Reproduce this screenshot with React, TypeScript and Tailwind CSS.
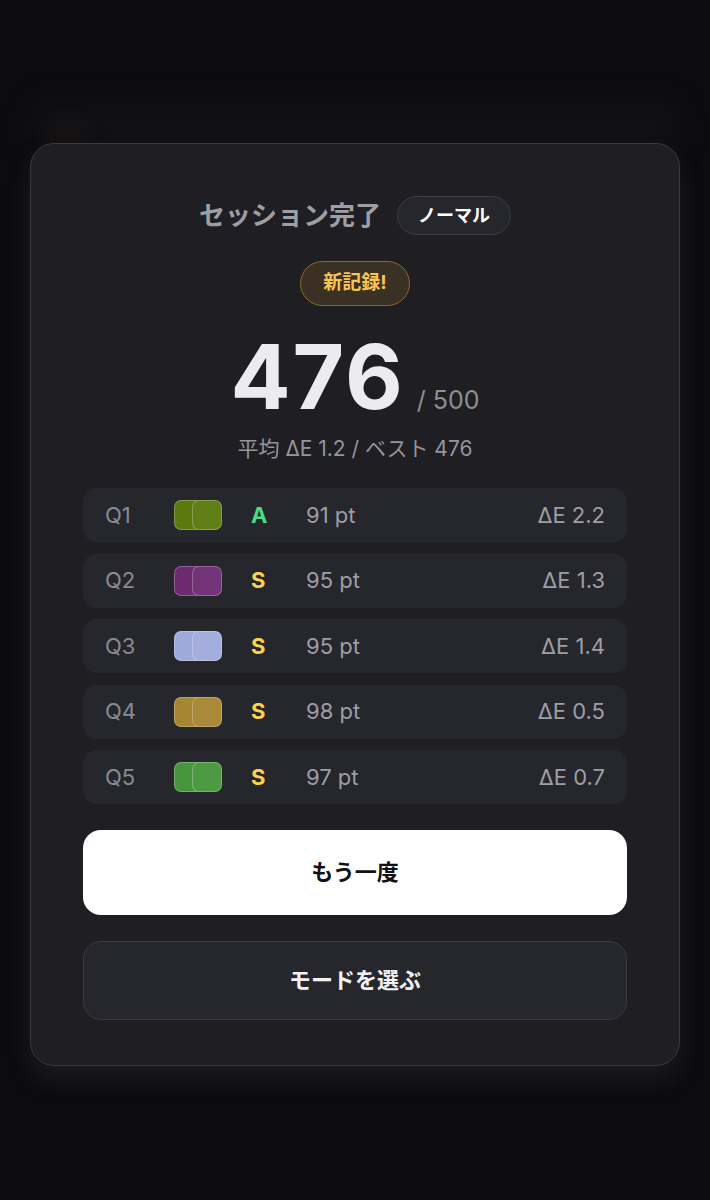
import React from 'react'

type Row = {
  q: string
  a: string
  b: string
  grade: string
  pt: number
  de: string
}

const rows: Row[] = [
  { q: 'Q1', a: '#5a790f', b: '#5f7e16', grade: 'A', pt: 91, de: '2.2' },
  { q: 'Q2', a: '#6b2b6e', b: '#733378', grade: 'S', pt: 95, de: '1.3' },
  { q: 'Q3', a: '#9faadb', b: '#a3aedd', grade: 'S', pt: 95, de: '1.4' },
  { q: 'Q4', a: '#a58633', b: '#a98a38', grade: 'S', pt: 98, de: '0.5' },
  { q: 'Q5', a: '#47963e', b: '#4c9b43', grade: 'S', pt: 97, de: '0.7' },
]

function Swatch({ a, b }: { a: string; b: string }) {
  return (
    <div className="relative h-[30px] w-[48px]">
      <div className="absolute left-0 top-0 h-[30px] w-[30px] rounded-[7px] border border-white/25" style={{ background: a }} />
      <div className="absolute left-[18px] top-0 h-[30px] w-[30px] rounded-[7px] border border-white/25" style={{ background: b }} />
    </div>
  )
}

export default function App() {
  return (
    <div
      className="relative min-h-[1200px] w-full overflow-hidden bg-[#0c0c10] px-[30px] pt-[143px]"
      style={{ fontFamily: 'Inter, "Noto Sans CJK JP", sans-serif' }}
    >
      {/* blurred page behind the modal */}
      <div className="pointer-events-none absolute left-[30px] right-[30px] top-[100px] h-[60px] rounded-[24px] bg-[#111113] blur-md" />
      <div className="pointer-events-none absolute left-[55px] top-[128px] h-[22px] w-[28px] rounded-full bg-[#3a1a22]/30 blur-md" />

      <div className="relative rounded-[24px] border border-[#38383f] bg-[#1e1e23] px-[52px] pb-[45px] pt-[52px] shadow-[0_14px_24px_rgba(60,60,66,0.3)]">
        <div className="flex items-center justify-center gap-[16px]">
          <span className="text-[26px] font-bold text-[#9e9ea6]">セッション完了</span>
          <span className="flex h-[39px] items-center rounded-full border border-[#3c3c44] bg-[#26262d] px-[20px] text-[18px] font-bold text-white">
            ノーマル
          </span>
        </div>

        <div className="mt-[26px] flex justify-center">
          <span className="flex h-[45px] items-center rounded-full border border-[#8a6a2e] bg-[#3a3023] px-[22px] text-[19px] font-bold text-[#f7c552]">
            新記録!
          </span>
        </div>

        <div className="mt-[26px] flex items-baseline justify-center gap-[12px]">
          <span className="text-[89px] font-bold leading-none tracking-[2px] text-[#ececf0]">476</span>
          <span className="text-[25px] leading-none text-[#8e8e96]">/ 500</span>
        </div>

        <div className="mt-[14px] text-center text-[21px] leading-[28px] text-[#95959d]">
          平均 ΔE 1.2 / ベスト 476
        </div>

        <div className="mt-[25px] flex flex-col gap-[11.5px]">
          {rows.map((r) => (
            <div key={r.q} className="flex h-[54px] items-center rounded-[14px] bg-[#26262d] px-[22px] text-[22px]">
              <span className="w-[69px] text-[#8a8a92]">{r.q}</span>
              <div className="w-[77px]">
                <Swatch a={r.a} b={r.b} />
              </div>
              <span className={`w-[55px] font-bold ${r.grade === 'A' ? 'text-[#4ade80]' : 'text-[#fcd34d]'}`}>{r.grade}</span>
              <span className="flex-1 text-[#9e9ea6]">{r.pt} pt</span>
              <span className="text-[#9e9ea6]">ΔE {r.de}</span>
            </div>
          ))}
        </div>

        <button className="mt-[26px] flex h-[85px] w-full items-center justify-center rounded-[18px] bg-white text-[22px] font-bold text-[#111114]">
          もう一度
        </button>

        <button className="mt-[26px] flex h-[79px] w-full items-center justify-center rounded-[18px] border border-[#3a3a42] bg-[#26262d] text-[22px] font-bold text-[#f2f2f4]">
          モードを選ぶ
        </button>
      </div>
    </div>
  )
}
